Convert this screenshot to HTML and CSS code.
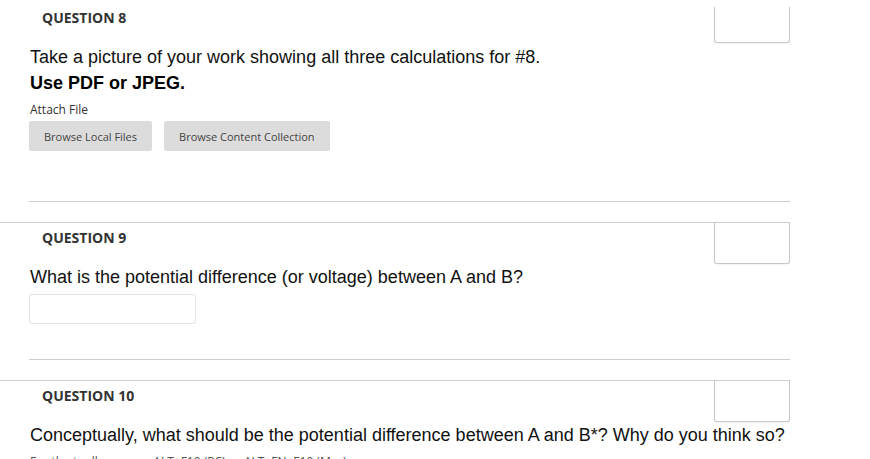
FILE: index.html
```html
<!DOCTYPE html>
<html>
<head>
<meta charset="utf-8">
<link rel="stylesheet" href="styles.css">
</head>
<body>
<div class="page">
  <section class="question first">
    <div class="q-head">
      <h3 class="q-title">Question 8</h3>
      <div class="points"></div>
    </div>
    <div class="q-body">
      <p class="q-text">Take a picture of your work showing all three calculations for #8.</p>
      <p class="q-text bold">Use PDF or JPEG.</p>
      <div class="attach-label">Attach File</div>
      <div class="btn-row">
        <button class="btn">Browse Local Files</button>
        <button class="btn">Browse Content Collection</button>
      </div>
      <div class="sep sep-q8"></div>
    </div>
  </section>
  <section class="question">
    <div class="q-head">
      <h3 class="q-title">Question 9</h3>
      <div class="points"></div>
    </div>
    <div class="q-body">
      <p class="q-text">What is the potential difference (or voltage) between A and B?</p>
      <input class="answer" type="text">
      <div class="sep sep-q9"></div>
    </div>
  </section>
  <section class="question">
    <div class="q-head">
      <h3 class="q-title">Question 10</h3>
      <div class="points"></div>
    </div>
    <div class="q-body">
      <p class="q-text">Conceptually, what should be the potential difference between A and B*? Why do you think so?</p>
      <p class="hint">For the toolbar, press ALT+F10 (PC) or ALT+FN+F10 (Mac).</p>
    </div>
  </section>
</div>
</body>
</html>
```
FILE: styles.css
```css
html, body {
  margin: 0;
  padding: 0;
  background: #fff;
}
body {
  font-family: "Open Sans", "Liberation Sans", sans-serif;
  color: #333;
  height: 459px;
  overflow: hidden;
}
.page {
  width: 790px;
  overflow: hidden;
  padding-top: 2px;
}
.question {
  border-top: 1px solid #cdcdcd;
  margin-bottom: 20px;
}
.question.first {
  border-top-color: transparent;
}
.q-head {
  display: flex;
  justify-content: space-between;
  align-items: flex-start;
  height: 42px;
}
.q-title {
  margin: 0;
  padding: 5px 0 0 42px;
  font-size: 14px;
  line-height: 20px;
  font-weight: 700;
  text-transform: uppercase;
  color: #333;
}
.points {
  width: 74px;
  height: 40px;
  border: 1px solid #c8c8c8;
  border-top: none;
  border-radius: 0 0 3px 3px;
  background: #fff;
  box-shadow: 0 1px 2px rgba(0,0,0,0.06);
}
.question.first .points {
  margin-top: 4px;
  height: 35px;
}
.q-body {
  padding-left: 29px;
}
.q-text {
  margin: 0;
  padding-left: 1px;
  font-family: "Liberation Sans", Arial, sans-serif;
  font-size: 18px;
  line-height: 24px;
  color: #111;
}
.q-text.bold {
  margin-top: 2px;
  font-weight: 700;
  color: #000;
}
.attach-label {
  margin-top: 6px;
  padding-left: 1px;
  font-size: 12px;
  line-height: 18px;
  color: #333;
}
.btn-row {
  display: flex;
  gap: 12px;
  margin-top: 2px;
}
.btn {
  height: 30px;
  padding: 0 15px;
  border: none;
  border-radius: 2px;
  background: #dcdcdc;
  font-family: "Open Sans", sans-serif;
  font-size: 11px;
  color: #444;
}
.sep {
  border-top: 1px solid #cdcdcd;
}
.sep-q8 {
  margin-top: 50px;
}
.answer {
  display: block;
  box-sizing: border-box;
  width: 167px;
  height: 30px;
  margin-top: 5px;
  border: 1px solid #e2e2e2;
  border-radius: 3px;
  background: #fff;
}
.sep-q9 {
  margin-top: 35px;
}
.hint {
  margin: 6px 0 0;
  padding-left: 1px;
  font-size: 12px;
  line-height: 18px;
  color: #555;
}
```
